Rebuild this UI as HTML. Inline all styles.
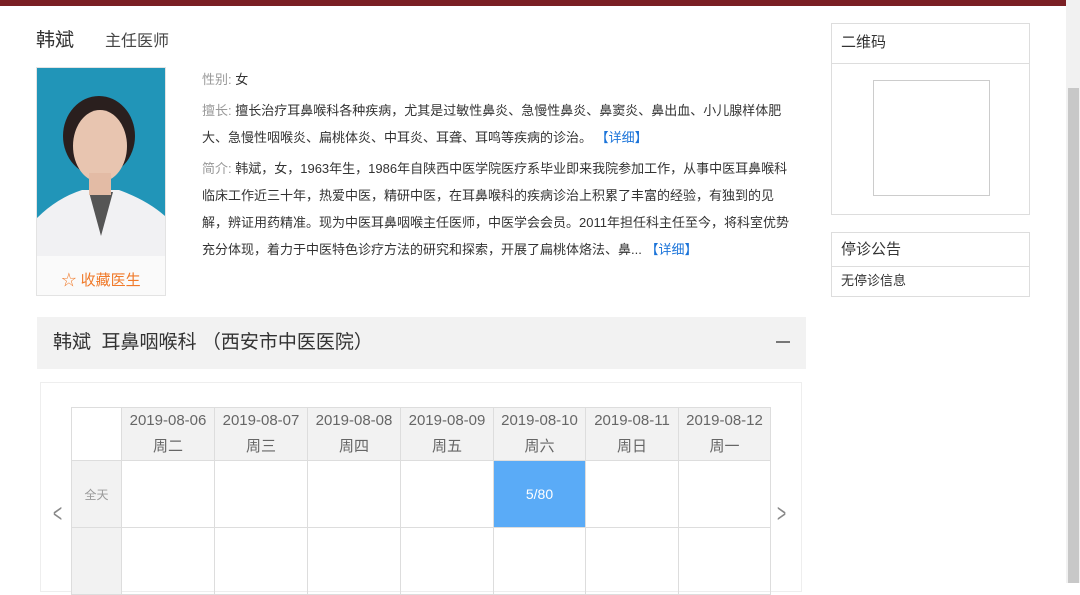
<!DOCTYPE html>
<html><head><meta charset="utf-8"><style>
*{margin:0;padding:0;box-sizing:border-box}
body{width:1080px;height:583px;overflow:hidden;background:#fff;font-family:"Liberation Sans","Noto Sans CJK SC",sans-serif;color:#333;position:relative}
.a{position:absolute}
.bar{left:0;top:0;width:1066px;height:6px;background:#7a1f24}
.sb{left:1066px;top:0;width:14px;height:583px;background:#f1f1f1}
.thumb{left:1068px;top:88px;width:11px;height:495px;background:#c8c8c8}
.t13{font-size:13px;line-height:27px}
.lbl{color:#999}
.blue{color:#1a73d9}
table{border-collapse:collapse;position:absolute;left:71px;top:407px}
td{border:1px solid #ddd;text-align:center;font-size:15px;color:#666}
</style></head><body>
<div class="a bar"></div>
<div class="a sb"></div><div class="a thumb"></div>
<div class="a" style="left:36px;top:25px;font-size:19px;color:#333">韩斌</div>
<div class="a" style="left:105px;top:27px;font-size:16px;color:#444">主任医师</div>
<div class="a" style="left:36px;top:67px;width:130px;height:229px;border:1px solid #e3e3e3;background:#fafafa">
<svg width="128" height="188" viewBox="0 0 128 188"><rect width="128" height="188" fill="#2195b8"/>
<path d="M0 188 L0 150 Q20 130 45 122 L82 122 Q110 132 128 148 L128 188Z" fill="#f1f1f3"/>
<path d="M52 124 L64 168 L76 124Z" fill="#555"/>
<ellipse cx="62" cy="68" rx="36" ry="40" fill="#2a1f1e"/>
<ellipse cx="63" cy="78" rx="27" ry="36" fill="#e8c5b0"/>
<rect x="52" y="105" width="22" height="22" fill="#e3bba5"/></svg>
<div style="text-align:center;color:#f07a2a;font-size:15px;line-height:40px">☆ 收藏医生</div></div>
<div class="a t13" style="left:202px;top:66px">
<div><span class="lbl">性别:</span> 女</div>
<div style="width:600px;margin-top:4px"><span class="lbl">擅长:</span> 擅长治疗耳鼻喉科各种疾病，尤其是过敏性鼻炎、急慢性鼻炎、鼻窦炎、鼻出血、小儿腺样体肥大、急慢性咽喉炎、扁桃体炎、中耳炎、耳聋、耳鸣等疾病的诊治。 <span class="blue">【详细】</span></div>
<div style="width:600px;margin-top:4px"><span class="lbl">简介:</span> 韩斌，女，1963年生，1986年自陕西中医学院医疗系毕业即来我院参加工作，从事中医耳鼻喉科<br>临床工作近三十年，热爱中医，精研中医，在耳鼻喉科的疾病诊治上积累了丰富的经验，有独到的见<br>解，辨证用药精准。现为中医耳鼻咽喉主任医师，中医学会会员。2011年担任科主任至今，将科室优势<br>充分体现，着力于中医特色诊疗方法的研究和探索，开展了扁桃体烙法、鼻... <span class="blue">【详细】</span></div>
</div>
<div class="a" style="left:37px;top:317px;width:769px;height:52px;background:#f2f2f2;font-size:19px;line-height:52px;padding-left:16px;color:#333">韩斌&nbsp; 耳鼻咽喉科 （西安市中医医院）<span style="position:absolute;right:16px;top:24px;width:14px;height:2px;background:#777"></span></div>
<div class="a" style="left:40px;top:382px;width:762px;height:210px;border:1px solid #eee"></div>
<div class="a" style="left:50px;top:498px;font-size:26px;color:#888;transform:scaleX(.6)">&lt;</div>
<div class="a" style="left:774px;top:498px;font-size:26px;color:#888;transform:scaleX(.6)">&gt;</div>
<table>
<tr style="height:53px"><td style="width:50px;background:#fff"></td>
<td style="width:93px;background:#f2f2f2;line-height:26px">2019-08-06<br>周二</td>
<td style="width:93px;background:#f2f2f2;line-height:26px">2019-08-07<br>周三</td>
<td style="width:93px;background:#f2f2f2;line-height:26px">2019-08-08<br>周四</td>
<td style="width:93px;background:#f2f2f2;line-height:26px">2019-08-09<br>周五</td>
<td style="width:92px;background:#f2f2f2;line-height:26px">2019-08-10<br>周六</td>
<td style="width:93px;background:#f2f2f2;line-height:26px">2019-08-11<br>周日</td>
<td style="width:92px;background:#f2f2f2;line-height:26px">2019-08-12<br>周一</td></tr>
<tr style="height:67px"><td style="background:#f2f2f2;font-size:12px;color:#999">全天</td><td></td><td></td><td></td><td></td><td style="background:#5aabf7;color:#fff;font-size:14px">5/80</td><td></td><td></td></tr>
<tr style="height:67px"><td style="background:#f2f2f2"></td><td></td><td></td><td></td><td></td><td></td><td></td><td></td></tr>
</table>
<div class="a" style="left:831px;top:23px;width:199px;height:192px;border:1px solid #ddd">
<div style="height:40px;border-bottom:1px solid #ddd;font-size:15px;line-height:38px;padding-left:9px">二维码</div>
<div style="position:absolute;left:41px;top:56px;width:117px;height:116px;border:1px solid #ccc"></div></div>
<div class="a" style="left:831px;top:232px;width:199px;height:65px;border:1px solid #ddd">
<div style="height:34px;border-bottom:1px solid #ddd;font-size:15px;line-height:34px;padding-left:9px">停诊公告</div>
<div style="font-size:13px;line-height:28px;padding-left:9px">无停诊信息</div></div>
</body></html>
